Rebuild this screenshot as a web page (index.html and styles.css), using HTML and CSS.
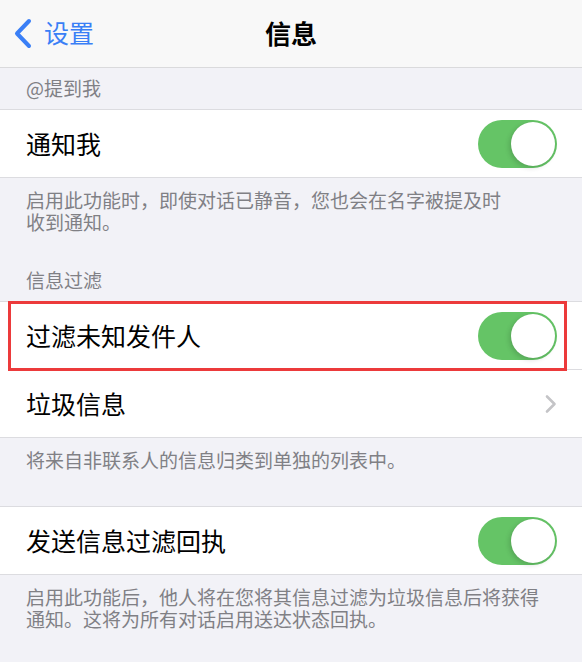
FILE: index.html
```html
<!DOCTYPE html>
<html lang="zh-CN">
<head>
<meta charset="utf-8">
<title>信息</title>
<link rel="stylesheet" href="styles.css">
</head>
<body>
<div class="screen">
  <header class="nav">
    <div class="back">
      <svg class="back-icon" width="36" height="67" viewBox="0 0 36 67"><path d="M29 21 L17 33.5 L29 46" fill="none" stroke="#3a7ff6" stroke-width="4" stroke-linecap="round" stroke-linejoin="round"/></svg>
      <span class="back-label">设置</span>
    </div>
    <div class="title">信息</div>
  </header>

  <div class="sec-header first">@提到我</div>
  <div class="group">
    <div class="row">
      <span class="label">通知我</span>
      <span class="toggle"><span class="knob"></span></span>
    </div>
  </div>
  <div class="sec-footer">启用此功能时，即使对话已静音，您也会在名字被提及时<br>收到通知。</div>

  <div class="sec-header">信息过滤</div>
  <div class="group">
    <div class="row highlighted">
      <span class="label">过滤未知发件人</span>
      <span class="toggle"><span class="knob"></span></span>
    </div>
    <div class="sep"></div>
    <div class="row">
      <span class="label">垃圾信息</span>
      <svg class="chev" width="14" height="20" viewBox="0 0 14 20"><path d="M3 2.5 L10.5 10 L3 17.5" fill="none" stroke="#c4c4c7" stroke-width="2.6" stroke-linecap="round" stroke-linejoin="round"/></svg>
    </div>
  </div>
  <div class="sec-footer">将来自非联系人的信息归类到单独的列表中。</div>

  <div class="group spaced">
    <div class="row">
      <span class="label">发送信息过滤回执</span>
      <span class="toggle"><span class="knob"></span></span>
    </div>
  </div>
  <div class="sec-footer">启用此功能后，他人将在您将其信息过滤为垃圾信息后将获得<br>通知。这将为所有对话启用送达状态回执。</div>
</div>
</body>
</html>
```
FILE: styles.css
```css
* { box-sizing: border-box; }
html, body { margin: 0; padding: 0; }
body {
  background: #f2f2f7;
  font-family: "Noto Sans CJK SC", "Noto Sans", sans-serif;
  width: 582px;
  height: 662px;
  overflow: hidden;
}
.screen { display: flex; flex-direction: column; }

.nav {
  height: 68px;
  background: #f8f8f8;
  border-bottom: 1px solid #dadadc;
  display: flex;
  align-items: center;
  position: relative;
}
.back {
  display: flex;
  align-items: center;
  height: 67px;
  color: #3a7ff6;
}
.back-icon { display: block; }
.back-label {
  font-size: 25px;
  line-height: 30px;
  margin-left: 8px;
  margin-top: -4px;
}
.title {
  position: absolute;
  left: 0; right: 0; top: 0;
  height: 67px;
  display: flex;
  align-items: center;
  justify-content: center;
  font-size: 26px;
  font-weight: 700;
  color: #000;
  margin-top: -1px;
}

.sec-header {
  font-size: 19px;
  line-height: 22px;
  color: #808085;
  padding: 0 26px 10px;
  margin-top: 36px;
}
.sec-header.first { margin-top: 0; padding-top: 9px; padding-bottom: 10px; }

.group {
  background: #fff;
  border-top: 1px solid #dcdce0;
  border-bottom: 1px solid #dcdce0;
}
.group.spaced { margin-top: 35px; }

.row {
  height: 67px;
  display: flex;
  align-items: center;
  justify-content: space-between;
  padding: 0 25px 0 26px;
  position: relative;
}
.row.highlighted::after {
  content: "";
  position: absolute;
  left: 8px;
  right: 15px;
  top: -1px;
  bottom: -2px;
  border: 3px solid #ec3a3b;
  pointer-events: none;
}
.sep {
  height: 1px;
  background: #dcdce0;
  margin-left: 26px;
}
.label {
  font-size: 25px;
  line-height: 30px;
  color: #000;
  margin-top: -1px;
}
.toggle {
  width: 79px;
  height: 48px;
  border-radius: 24px;
  background: #65c466;
  position: relative;
  flex: none;
}
.knob {
  position: absolute;
  right: 2px;
  top: 2px;
  width: 44px;
  height: 44px;
  border-radius: 50%;
  background: #fff;
  box-shadow: -2px 2px 5px rgba(0,0,0,0.14), 0 0 1px rgba(0,0,0,0.1);
}
.chev { display: block; margin-right: -1px; }

.sec-footer {
  font-size: 19px;
  line-height: 22px;
  color: #808085;
  padding: 11px 26px 0;
}
```
